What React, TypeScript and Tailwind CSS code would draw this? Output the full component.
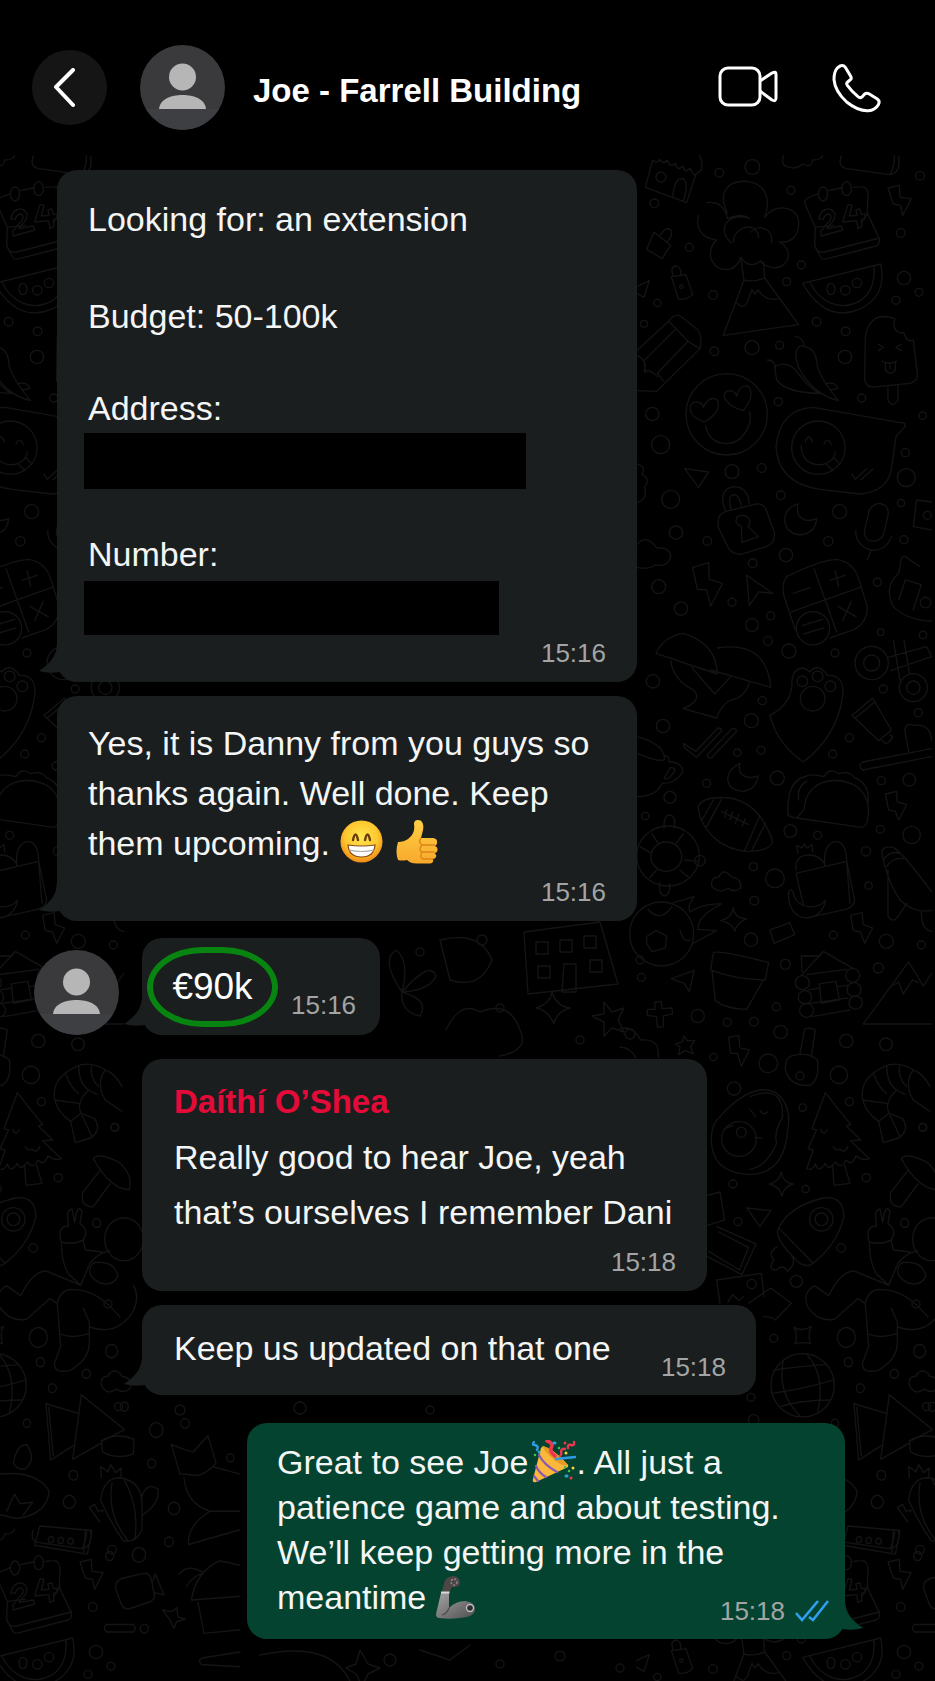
import React from 'react'

const chatFont = "font-['Liberation_Sans',Arial,sans-serif]"

function Dots({ points }: { points: number[][] }) {
  return (
    <>
      {points.map(([x, y, r]) => (
        <circle key={`${x}-${y}`} cx={x} cy={y} r={r} />
      ))}
    </>
  )
}

const topDots = [
  [397, 51, 22], [298, 68, 13], [103, 160, 13], [208, 292, 12], [513, 121, 12], [900, 77, 13], [842, 249, 13],
  [544, 345, 12], [500, 395, 12], [279, 435, 13], [112, 459, 11], [72, 521, 10], [852, 384, 20], [828, 451, 12],
  [897, 427, 12], [590, 515, 13], [677, 544, 13], [283, 604, 13], [396, 593, 21], [479, 586, 12], [675, 621, 20],
  [725, 744, 12], [475, 755, 12], [97, 792, 20], [122, 884, 27], [908, 797, 11], [856, 908, 12], [859, 983, 27],
  [336, 965, 21], [425, 954, 13], [152, 1048, 27], [482, 1036, 13], [659, 1085, 21], [843, 1059, 11], [168, 1148, 20],
  [262, 1173, 13], [625, 1174, 14], [852, 1169, 12], [498, 1215, 20], [398, 1240, 13], [116, 1310, 21], [772, 1297, 12],
  [336, 1357, 12], [183, 1376, 20], [452, 1398, 12], [396, 1425, 19], [444, 1473, 13], [782, 1447, 10], [909, 1455, 11],
]

const midDots = [
  [507, 33, 21], [645, 39, 12], [99, 124, 20], [427, 182, 12], [394, 242, 21], [129, 258, 20], [790, 147, 12],
  [895, 218, 12], [688, 293, 12], [638, 342, 12], [352, 338, 11], [423, 331, 12], [260, 430, 12], [472, 414, 21],
  [784, 422, 12], [868, 419, 19], [150, 472, 18], [76, 528, 11], [511, 573, 19], [593, 586, 12], [781, 568, 12],
  [875, 585, 26], [738, 634, 14], [400, 680, 12], [465, 715, 28], [403, 782, 13], [746, 737, 11], [393, 899, 20],
  [640, 885, 12], [799, 904, 21], [904, 915, 12], [496, 973, 15], [775, 984, 15], [64, 1012, 12], [233, 1128, 20],
  [322, 1147, 12], [402, 1145, 13], [469, 1101, 12], [482, 1176, 20], [679, 1203, 20], [798, 1213, 19],
  [280, 1251, 11], [445, 1270, 28], [657, 1305, 26], [342, 1346, 20], [688, 1385, 12], [548, 1403, 11], [908, 1462, 11],
]

function Doodles() {
  return (
    <svg
      className="absolute inset-0 h-full w-full"
      fill="none"
      stroke="#131413"
      strokeLinecap="round"
      strokeLinejoin="round"
      aria-hidden="true"
    >
      <defs>
        <g id="doodle-tile">
          <g transform="translate(620 150) scale(.3333)" strokeWidth="4">
            <Dots points={topDots} />
            {/* house, cloud and eraser */}
            <path d="M98 30L76 112L200 158L228 72L244 60Q250 30 236 14M98 30Q112 44 118 28Q130 46 142 30Q150 56 166 40Q172 66 188 48Q196 74 210 54Q220 80 228 72M158 138Q164 82 188 86Q208 94 190 154" />
            <circle cx="123" cy="81" r="15" />
            <path d="M490 18Q480 50 512 52Q530 58 548 42Q574 56 578 30Q604 30 608 16M664 18Q652 50 680 56L810 74Q828 40 822 16M810 74Q842 70 836 20" />
            {/* volcano */}
            <path d="M322 190C290 120 330 92 378 94C432 98 456 140 434 202C460 160 530 166 536 214C538 260 510 280 478 276C520 296 512 350 464 354C430 350 420 332 422 332Q390 360 362 322C350 360 320 364 296 354C260 330 268 290 290 270C240 264 226 230 236 196M260 158Q310 150 322 206C372 188 380 200 388 206M334 278C290 240 320 190 380 202M340 276C340 230 410 210 416 262M394 246C420 218 462 240 454 278" />
            <path d="M362 322L372 390L310 556L536 524L434 384L430 336M372 390Q400 398 434 384M350 458Q376 486 388 440L396 418L404 432L414 420Q440 456 476 446" />
            {/* calendar */}
            <path d="M596 130L564 144Q550 150 556 164L586 232L584 286L602 322Q608 330 622 326L768 288Q780 284 778 266L742 190L744 130Q740 108 724 110L700 112M624 122L664 114M586 232L640 226M584 286Q590 310 614 306L778 264M744 190L728 214" />
            <ellipse cx="609" cy="132" rx="14" ry="21" />
            <ellipse cx="680" cy="116" rx="14" ry="21" />
            <path d="M596 206Q606 172 632 178Q654 190 640 212L620 236L664 228L668 240L604 258L602 244L632 208Q636 192 624 192Q614 194 610 208ZM684 164L696 166L688 198L712 196L708 180L720 176L724 194L736 192L734 206L724 208L726 230L714 236L710 212L668 216Z" />
            {/* watermelon */}
            <path d="M548 400L782 342Q804 440 714 480C640 508 586 466 548 400ZM570 396C600 460 660 480 710 458Q768 430 762 348" />
            <ellipse cx="633" cy="417" rx="12" ry="17" />
            <circle cx="676" cy="421" r="14" />
            <circle cx="711" cy="399" r="14" />
            {/* small locks and bolts */}
            <path d="M102 246L152 286L126 326L80 298ZM122 254Q140 226 154 242Q158 260 140 276M154 380L198 374L218 434Q200 450 176 448ZM160 378Q148 350 170 348Q186 356 182 376M804 114L838 106L840 142L874 146L848 196L842 166L820 162ZM50 410L88 392L72 442L50 430" />
            <circle cx="184" cy="410" r="5" />
            {/* pencil */}
            <path d="M50 602L146 514Q162 488 184 500L234 540Q248 564 240 596L110 724L50 722M146 514L204 574L240 596M204 574L112 670L132 694M164 540L72 632L76 668M50 616Q84 630 72 664Q92 658 112 680" />
            {/* chili peppers */}
            <path d="M530 600Q540 580 560 592Q590 600 592 650Q610 700 656 752Q600 740 560 690Q520 640 530 600ZM526 560Q550 560 552 590M464 650Q500 630 530 664Q580 730 606 730Q500 730 470 690ZM442 630Q464 630 466 652M620 700Q650 696 652 716L632 720" />
            {/* ice lolly */}
            <path d="M824 506Q750 480 736 560L734 690Q740 716 770 710L870 700Q896 692 892 670L880 570Q858 578 852 548Q824 552 822 524ZM804 710V750Q818 776 834 750V706M774 582L790 592L776 602M844 582L828 592L844 602M786 634Q810 644 830 634M796 638V660Q812 680 826 660V636M810 640V656" />
            {/* heart eyes */}
            <circle cx="320" cy="793" r="122" />
            <path d="M252 816C196 796 204 754 232 756Q250 760 250 772Q266 738 290 748C304 770 290 796 252 816ZM370 782C302 760 302 724 330 722Q346 724 350 738Q358 704 384 708C402 728 390 756 370 782ZM256 826C270 890 330 890 360 866C386 842 396 810 388 786" />
            {/* speech balloon */}
            <path d="M580 772Q480 776 468 890Q474 1000 600 1018L720 1032Q800 1026 814 960L828 860L856 828Q856 816 842 818Z" />
            <circle cx="595" cy="893" r="80" />
            <path d="M556 876Q566 846 578 876M612 882Q624 858 634 884M544 886C540 960 640 960 646 906M620 944L638 960M640 922L656 938M696 972L706 988L740 956M722 990L758 958" />
            {/* padlock */}
            <path d="M318 1086Q290 1020 340 1010Q384 1010 388 1062M334 1078Q320 1034 344 1034Q360 1040 364 1068M296 1104Q300 1090 320 1084L410 1062Q430 1060 438 1078L464 1150Q464 1180 440 1190L360 1214Q330 1212 318 1180L294 1130ZM364 1130Q340 1118 352 1100Q376 1090 388 1108Q392 1122 384 1130L416 1160L366 1178Z" />
            {/* moon, microphone, planes */}
            <path d="M534 1062C470 1080 490 1160 546 1154Q586 1148 590 1106C550 1122 526 1100 534 1062ZM748 1080Q770 1050 794 1066Q808 1076 804 1096L790 1156Q774 1178 748 1172Q730 1160 734 1140ZM708 1140C700 1200 790 1230 814 1160M752 1204L742 1230M194 956L266 966L236 1012ZM380 1276L458 1330L416 1326L388 1366ZM218 1252L266 1238L268 1288L308 1300L272 1368L260 1320L232 1318Z" />
            {/* calculator */}
            <path d="M500 1280Q600 1230 650 1228Q700 1236 716 1286L742 1370Q742 1420 700 1440L630 1464M500 1280Q480 1310 496 1350L526 1440M582 1256L650 1446M514 1386L720 1312M520 1330L572 1312M632 1290L676 1276M646 1262L656 1310M652 1368L708 1400M694 1354L668 1412M548 1426L608 1408M552 1452L612 1434" />
            <circle cx="579" cy="1435" r="50" />
            <path d="M50 1184Q80 1150 110 1194Q150 1190 152 1222Q140 1254 106 1244Q90 1260 50 1252M50 942Q80 950 66 972Q94 990 74 1010Q84 1050 50 1058M890 1050L935 1056M890 1050L880 1130L935 1140M844 1226Q850 1210 870 1230L900 1250M844 1226L836 1270Q790 1310 820 1370Q860 1410 935 1414M856 1290L904 1304L880 1380M856 1290L836 1350" />
            <circle cx="922" cy="1096" r="12" />
            <circle cx="917" cy="1358" r="16" />
          </g>
          <g transform="translate(620 640) scale(.3333)" strokeWidth="4">
            <Dots points={midDots} />
            {/* parasols */}
            <path d="M108 40Q130 -10 190 -20Q290 10 292 102ZM292 24Q440 0 452 142L272 90M152 62Q160 120 220 150Q250 180 190 206L290 234Q310 180 350 176Q380 160 390 124M215 82L284 162L330 112" />
            {/* paw guitar */}
            <path d="M516 120Q520 86 548 84Q566 90 568 96Q596 66 622 106Q676 104 668 170Q650 290 550 366Q470 310 450 226Q520 190 516 120Z" />
            <circle cx="578" cy="176" r="37" />
            <circle cx="547" cy="124" r="16" />
            <circle cx="593" cy="109" r="16" />
            <circle cx="631" cy="139" r="16" />
            {/* scissors, cup, brush */}
            <circle cx="755" cy="69" r="50" />
            <circle cx="755" cy="69" r="24" />
            <circle cx="880" cy="143" r="42" />
            <circle cx="880" cy="143" r="20" />
            <path d="M804 52L920 20L935 50L812 92M820 0L840 120M852 0L868 100M696 226L758 174L814 270L776 302ZM704 236L764 186M786 300Q800 324 818 290L810 284M728 366L935 326M728 390L935 350M728 366Q712 376 728 390M866 334L854 270Q860 246 882 256Q930 250 935 300M190 310L228 334L294 264Q310 264 302 276L230 352L194 324ZM262 344L336 266Q352 264 348 276L276 352Q262 358 262 344" />
            {/* teacup, moon, football */}
            <path d="M50 290Q130 310 134 356Q130 372 50 340M134 346Q150 350 148 366Q190 366 188 398Q160 434 126 430Q110 470 50 470M150 384Q166 380 164 394Q144 424 132 414ZM360 370C300 400 320 456 372 454Q410 446 414 408C380 420 350 406 360 370ZM234 500Q250 466 330 474Q420 490 458 604Q450 634 380 634C290 626 240 560 234 500ZM260 560L304 478M246 540L284 474M374 632L418 530M394 634L436 550M304 514L386 554M320 508L314 532M338 516L330 540M356 524L346 550M376 536L366 560" />
            {/* taco */}
            <path d="M504 520Q500 420 560 408Q580 400 612 410Q630 380 656 402Q690 390 704 414Q750 430 744 490Q750 556 726 562L530 534Q500 530 504 520ZM552 508C560 420 640 410 690 430Q726 440 744 490M552 508L530 534M536 480Q530 440 560 424" />
            {/* life ring */}
            <ellipse cx="144" cy="648" rx="94" ry="90" />
            <ellipse cx="139" cy="650" rx="46" ry="44" />
            <path d="M132 566Q130 526 150 524Q170 530 162 566M120 728Q114 764 134 768Q154 760 148 730M60 620L94 640M96 582L116 612M190 582L168 610M194 660L232 664M180 690L206 712M90 712L110 690" />
            <circle cx="240" cy="662" r="16" />
            {/* grocery bag */}
            <path d="M528 700L680 664L704 780Q700 806 670 810L560 834M528 700L550 794M680 664L690 790M528 690Q524 650 556 646Q600 640 616 678M534 640L530 616L546 624L552 612L562 624L576 614L578 636M614 670Q610 610 650 604Q680 610 680 664M506 756Q514 740 520 760C530 810 600 810 616 780C610 850 500 860 506 756ZM276 740Q270 710 296 712Q310 680 336 712Q364 712 362 744Q340 760 324 744Q300 764 276 740Z" />
            {/* comet football */}
            <circle cx="125" cy="882" r="96" />
            <path d="M80 890L108 872L140 888L136 924L96 936L80 910ZM84 808Q120 850 156 800M180 870Q190 910 210 900M150 792L222 770Q200 800 210 816Q250 790 304 792Q230 830 234 868L290 872L216 912" />
            <path d="M340 802Q344 836 380 836Q350 850 344 874Q336 848 302 842Q336 834 340 802ZM450 870L510 848L524 884L462 910ZM692 826L726 818L730 854L758 864L734 910L722 876L700 872ZM796 462L830 454L832 486L860 494L836 540L826 514L806 510ZM154 1016L222 992L208 1054L192 1030ZM326 1192L356 1186L360 1224L388 1230L364 1278L352 1240L332 1240Z" />
            {/* pencil, mountain */}
            <path d="M786 640Q784 616 820 622Q850 640 935 756M786 640Q800 720 840 780Q880 820 935 812M790 660Q810 630 840 640M800 680Q820 650 850 656M804 690V830Q820 850 834 830L860 790M904 816Q904 870 935 874M730 1152H935M730 1152L866 966L910 1038L935 1000M820 1036L836 1026L850 1062L878 1020L896 1028" />
            {/* plant pot and cabin */}
            <path d="M280 938Q300 930 446 968L436 1020Q350 1020 272 990ZM276 992L286 1082Q320 1108 380 1108L430 1020M546 996L544 948H600L610 934L700 986M546 1004L608 936M560 1004L680 988M566 1050L600 1044M654 1040L684 1036M572 1090L684 1074M576 1130L690 1110M598 1032L648 1024L658 1080L604 1090Z" />
            <Dots points={[[547, 1028, 21], [555, 1072, 20], [560, 1111, 21], [698, 1006, 21], [702, 1049, 21], [707, 1088, 20]]} />
            <path d="M104 1086L124 1084L126 1106L156 1104L158 1122L130 1128L130 1160L112 1162L110 1130L82 1126V1108L106 1108ZM192 1188L202 1202L224 1202L212 1220L220 1242L196 1232L176 1244L180 1220L166 1212L188 1206ZM0 1166Q40 1156 62 1200Q110 1196 114 1230L116 1254M0 1222Q30 1220 48 1254M540 1240L554 1168Q570 1160 586 1170L574 1252M520 1246Q570 1236 592 1260Q600 1320 570 1336Q510 1340 496 1290Q494 1250 520 1246Z" />
            <circle cx="540" cy="1308" r="12" />
          </g>
          <g transform="translate(700 1050) scale(.3333)" strokeWidth="4">
            <Dots
              points={[
                [99, 402, 12], [317, 417, 11], [114, 515, 12], [424, 594, 13], [289, 694, 18], [155, 702, 14], [499, 383, 12],
                [669, 232, 12], [153, 1042, 12], [648, 762, 12], [161, 1110, 16], [680, 1070, 12], [221, 865, 12],
              ]}
            />
            {/* avocado */}
            <path d="M60 200Q150 100 220 124Q280 160 262 250Q250 370 150 374Q30 370 34 260Q36 220 60 200ZM150 140Q250 100 248 200Q220 250 230 280Q200 350 150 358M74 236L98 226M164 262L184 264M150 178L166 200M180 182Q190 198 202 186" />
            <circle cx="117" cy="267" r="52" />
            <circle cx="124" cy="247" r="15" />
            {/* tree */}
            <path d="M376 128L336 236L350 240L324 296L340 300L320 356Q336 364 346 342Q356 372 376 340Q386 366 406 336Q424 360 438 330Q456 350 468 318Q490 334 508 326L452 272L482 270L440 228L452 224ZM398 348L402 406L450 400L434 346M362 238Q370 260 382 240M400 290Q410 306 420 296Q430 314 444 290" />
            {/* shrimp */}
            <path d="M690 184L640 150Q610 100 640 60Q670 70 690 110M640 60Q580 20 520 70Q480 100 488 150Q500 190 536 214L550 278L596 264Q630 240 608 206L568 190Q550 160 590 120L616 134M520 70Q540 120 560 130M488 150L560 160M560 46Q560 100 590 120M600 44Q590 80 620 110M536 214L568 190M570 196L600 260" />
            {/* sparkles and plane */}
            <path d="M244 366Q248 398 280 402Q250 410 246 438Q240 410 208 402Q238 396 244 366ZM282 832Q306 846 334 830Q322 856 332 882Q308 874 284 882Q296 856 282 832ZM140 474L212 482L180 530Z" />
            {/* rocket */}
            <path d="M232 544Q260 470 370 444Q430 436 432 500Q410 590 330 646Q300 650 280 620Q236 580 232 544ZM238 536L340 640M232 590Q200 610 222 630Q200 660 230 660Q250 640 262 664Q290 640 276 620" />
            <circle cx="364" cy="508" r="35" />
            <circle cx="364" cy="508" r="19" />
            {/* photos */}
            <path d="M22 436L60 426L74 510L22 526M50 530L168 582L126 674L22 620M56 546L146 592L118 660L26 604M50 690L184 670L192 740M50 690L60 760M84 756L98 734L118 752L130 740M146 760L212 714L274 760L226 810L214 802L190 800" />
            {/* ball */}
            <circle cx="308" cy="1006" r="95" />
            <path d="M222 960Q290 950 380 944M216 1030Q300 1020 402 990M240 1070Q300 1050 392 1050M250 930Q230 1030 300 1098M320 912Q380 980 352 1090" />
          </g>
        </g>
        <g id="doodle-corner">
          <g transform="translate(0 1100) scale(.3333 .3704)" strokeWidth="4">
            {/* mushroom */}
            <path d="M280 158Q300 140 360 170Q400 206 388 242Q330 240 280 158ZM300 190L248 250Q240 290 280 288L330 226" />
            {/* astronaut */}
            <circle cx="372" cy="376" r="58" />
            <path d="M184 384Q170 340 206 340Q196 296 216 294L224 330Q230 280 246 300L240 334Q268 350 250 378Q220 392 184 384ZM184 384Q184 440 206 470L242 500L270 440Q290 416 330 406M250 382L256 404L314 412M62 528Q100 460 140 462L242 500M62 528L20 502Q-20 520 0 560Q30 600 80 592L150 536L172 550M172 550Q180 510 220 512Q290 510 360 586M172 550L182 664L164 710Q160 740 210 730Q270 700 268 650V600L250 562M180 632Q220 646 268 630M268 612Q350 640 400 570Q420 530 400 500M280 440Q340 430 354 474Q340 504 300 494Q250 470 280 440Z" />
            {/* sandwiches and cloud */}
            <path d="M138 820L152 972L218 934M138 820L236 846M146 830L160 960M244 796L218 970L304 926M244 796L374 890L308 920M304 920Q350 896 402 916L400 956Q350 972 308 950ZM304 770Q300 746 322 746Q346 716 366 746Q396 750 392 776Q370 796 350 780Q320 800 304 770Z" />
            {/* cactus */}
            <path d="M302 1080Q310 1020 360 1020Q430 1030 426 1100L426 1160Q410 1196 370 1190Q330 1140 302 1080ZM336 1034Q320 1120 384 1190M370 1020Q420 1100 404 1186M304 1020L302 990L324 1004L332 984L346 1006L364 994L362 1020M426 1070Q440 1030 474 1050Q480 1090 428 1120M300 1140L268 1100L284 1092L294 1110L310 1108" />
            {/* bowl, brick, camera */}
            <path d="M0 1010Q110 1000 148 1056Q140 1120 50 1130L0 1120M40 980Q50 930 80 930Q110 970 76 996Q50 1000 40 980ZM20 1110L44 1064L60 1090L98 1086L70 1120M120 1150L276 1162L262 1226L104 1202ZM252 1220L256 1162M346 1316Q346 1300 366 1292L430 1278Q450 1276 454 1296L464 1340Q460 1354 440 1358L386 1374Q366 1374 362 1356ZM456 1306L466 1280L492 1336L464 1330" />
            <Dots points={[[153, 1187, 8], [182, 1189, 8], [212, 1191, 8], [121, 708, 12], [115, 641, 27], [157, 778, 12], [259, 739, 12], [81, 873, 11], [335, 678, 18], [373, 828, 12], [469, 891, 20], [555, 873, 13], [455, 981, 12], [220, 1013, 13], [208, 1085, 18], [507, 1193, 13], [329, 1231, 12], [417, 1228, 20], [433, 1427, 12], [522, 1103, 17], [290, 332, 12], [691, 966, 11]]} />
            {/* fox, hut, sliders */}
            <path d="M540 1010L514 930L560 946L580 950L624 906L648 980Q620 1010 590 1014Q550 1010 540 1010ZM640 990L720 1010M552 1020Q560 1090 630 1110L720 1110M630 1110Q560 1150 566 1200L720 1160M574 1350Q590 1270 660 1244L720 1256M574 1350L720 1340M594 1356L612 1440L720 1430M538 1280Q560 1250 612 1276Q570 1290 560 1314M488 1376Q520 1388 530 1370L534 1396L556 1402L530 1408L522 1426L510 1404ZM604 1524Q590 1510 610 1506L720 1490M604 1524L720 1530M320 1416H400Q412 1426 400 1436H320Q306 1426 320 1416" />
          </g>
        </g>
      </defs>
      <use href="#doodle-tile" />
      <use href="#doodle-tile" x="-808" />
      <use href="#doodle-tile" y="1374" />
      <use href="#doodle-tile" x="-808" y="1374" />
      <use href="#doodle-corner" />
      <use href="#doodle-corner" x="808" />
      <g strokeWidth="1.4">
        {/* flower, flats and pinwheel between the bubbles */}
        <path d="M524 932L600 922L618 984L528 994ZM536 942h12v12h-12zM560 940h12v12h-12zM584 936h12v12h-12zM538 966h12v12h-12zM564 964h12v28h-14zM590 960h12v12h-12zM402 992Q380 960 396 950Q410 960 402 992Q430 960 436 976Q430 990 402 992Q430 1000 420 1016Q400 1012 402 992M440 940Q480 930 492 960Q480 990 450 980ZM446 1030Q460 1000 480 1012Q510 1000 520 1030Q530 1050 500 1056M552 992Q556 1006 570 1008Q556 1012 554 1024Q548 1010 536 1008Q550 1004 552 992ZM604 1002l8 10 12 -4 -6 12 6 12 -12 -4 -8 8v-14l-12 -6 12 -2zM260 1655Q330 1640 350 1681M420 1650L450 1660L470 1645M360 1650l8 14 12 4-12 6-6 12-6-12-10-6 10-4z" />
        <Dots points={[[420, 952, 4], [500, 1008, 4], [580, 1040, 4], [630, 1034, 5], [482, 940, 5], [640, 960, 4], [390, 1660, 6], [500, 1664, 4], [560, 1656, 5], [620, 1668, 4], [180, 1410, 5], [300, 1408, 6], [430, 1410, 4]]} />
      </g>
    </svg>
  )
}

function Avatar() {
  return (
    <svg className="h-[85px] w-[85px] shrink-0" viewBox="0 0 85 85" role="img" aria-label="Profile picture">
      <circle cx="42.5" cy="42.5" r="42.5" fill="#3a3a3d" />
      <path d="M6 64H79A42.5 42.5 0 0 1 6 64Z" fill="#3e3f43" />
      <circle cx="42.5" cy="32" r="13.5" fill="#b6b6b6" />
      <path d="M19 64C20 54 31 50 42.5 50S65 54 66 64Z" fill="#b6b6b6" />
    </svg>
  )
}

function Tail({ side = 'left' }: { side?: 'left' | 'right' }) {
  return side === 'left' ? (
    <svg className="absolute bottom-[7px] -left-[18px] h-8 w-6" viewBox="0 0 24 32" fill="#1a1e1f" aria-hidden="true">
      <path d="M18 0C18 12 12 20 0 28Q10 31 21 29L23 20V0Z" />
    </svg>
  ) : (
    <svg className="absolute -right-[18px] bottom-[7px] h-8 w-6" viewBox="0 0 24 32" fill="#044330" aria-hidden="true">
      <path d="M6 0C6 12 12 20 24 28Q14 31 3 29L1 20V0Z" />
    </svg>
  )
}

function Time({ value, className = '' }: { value: string; className?: string }) {
  return <time className={`block text-right text-[26px] leading-[30px] text-[#a3a5a5] ${className}`}>{value}</time>
}

function Grin() {
  return (
    <svg className="mx-px inline-block h-[43px] w-[43px] align-[-8px]" viewBox="0 0 43 43" role="img" aria-label="grinning face">
      <defs>
        <radialGradient id="grin" cx=".5" cy=".4" r=".6">
          <stop offset="0" stopColor="#ffe64f" />
          <stop offset=".65" stopColor="#fdc72e" />
          <stop offset="1" stopColor="#f08a17" />
        </radialGradient>
      </defs>
      <circle cx="21.5" cy="21.5" r="21" fill="url(#grin)" />
      <path d="M13 20Q15.5 9 18 20M25 20Q27.5 9 30 20" fill="none" stroke="#6b3d0c" strokeWidth="2.4" strokeLinecap="round" />
      <path d="M8 25Q21.500 27 35 25Q34 37 21.5 37T8 25Z" fill="#fff" stroke="#8a4b16" strokeWidth="1.2" />
      <path d="M9 30Q21.5 33 34 30" fill="none" stroke="#a9a9a9" strokeWidth="1.2" />
    </svg>
  )
}

function ThumbsUp() {
  return (
    <svg className="mx-[2px] inline-block h-[44px] w-[42px] align-[-9px]" viewBox="0 0 42 44" role="img" aria-label="thumbs up">
      <defs>
        <linearGradient id="thumb" x1="0" y1="0" x2="0" y2="1">
          <stop offset="0" stopColor="#ffcf45" />
          <stop offset="1" stopColor="#f7a92b" />
        </linearGradient>
      </defs>
      <path
        d="M2 22Q8 22 12 19C17 15 19 11 18 4Q18 0 22 0C27 0 28 6 27 10L25 18H37Q42 19 41 23Q41 25 39 26Q42 27 41.5 30Q41 33 38.5 33Q41 35 40 37Q39 39 37 39Q38 43 34 43.5H22Q15 44 11 40Q6 41 2 40Q-1 32 2 22Z"
        fill="url(#thumb)"
      />
      <path d="M25 18Q22 22 26 25H39M26 25Q22 30 26 32H38.5M26 32Q23 37 27 39H37" fill="none" stroke="#dd8518" strokeWidth="1.4" />
    </svg>
  )
}

function Party() {
  return (
    <svg className="ml-1 inline-block h-[43px] w-[44px] align-[-9px]" viewBox="0 0 44 43" fill="none" strokeLinecap="round" role="img" aria-label="party popper">
      <path d="M11 6Q22 9 36 25Q37 27 34 28L4 42Q0 43 1 39L9 8Z" fill="#fbb83a" />
      <path d="M11 6Q22 9 36 25Q30 27 20 18T11 6Z" fill="#e89a24" />
      <path d="M7 15Q12 25 25 32M4 26Q7 33 14 37M2 36L6 41" stroke="#8a59b5" strokeWidth="2.2" />
      <path d="M15 1Q22 3 19 8Q18 12 23 16" stroke="#ef3651" strokeWidth="3.6" />
      <path d="M2 2Q-1 5 3 5Q7 6 5 10" stroke="#2d9be8" strokeWidth="2.4" />
      <path d="M42 2Q43 6 39 5Q35 4 36 8M28 16Q30 14 29 11Q30 8 33 9" stroke="#ef3651" strokeWidth="2.4" />
      <path d="M24 19L43 17" stroke="#2d9be8" strokeWidth="2.6" />
      <path d="M22 3h1M34 36h1M7 12h0" stroke="#23a6e0" strokeWidth="3" />
      <path d="M27 8h0M33 27h0M3 15h0M37 31h0" stroke="#42c05a" strokeWidth="2.6" />
      <path d="M33 3h0M39 38h0" stroke="#ef3651" strokeWidth="3" />
      <path d="M41 28h0M34 13h0" stroke="#ffcf45" strokeWidth="3" />
    </svg>
  )
}

function RoboArm() {
  return (
    <svg className="inline-block h-[43px] w-[40px] align-[-10px]" viewBox="0 0 40 43" role="img" aria-label="mechanical arm">
      <defs>
        <linearGradient id="arm" x1="0" y1="0" x2="1" y2="1">
          <stop offset="0" stopColor="#a3a3a3" />
          <stop offset=".5" stopColor="#7a7a7a" />
          <stop offset="1" stopColor="#4d4d4d" />
        </linearGradient>
      </defs>
      <path d="M5 17L13 17L13 32Q20 25 29 25Q39 26 39 33Q39 39 31 41Q16 44 3 42Q0 42 0 38Z" fill="url(#arm)" />
      <path d="M6 16L8 7Q10 0 18 0Q24 1 24 7Q23 12 16 11L13 17Z" fill="#4c4646" />
      <path d="M5 16.5H13.5" stroke="#d9d9d9" strokeWidth="2" />
      <circle cx="18" cy="6" r="3" fill="none" stroke="#908a8a" strokeWidth="1.4" strokeDasharray="2 1.5" />
      <circle cx="34" cy="32" r="3.5" fill="#2f2f2f" stroke="#bdbdbd" strokeWidth="1.4" />
      <path d="M13 32Q11 38 6 39" fill="none" stroke="#4d4d4d" strokeWidth="1.2" />
    </svg>
  )
}

const incoming = 'relative max-w-full rounded-[20px] bg-[#1a1e1f]'

export default function App() {
  return (
    <div className={`flex min-h-screen flex-col bg-black text-[34px] leading-[50px] text-[#f4f5f5] ${chatFont}`}>
      <header className="flex items-center pt-[45px] pr-[53px] pb-[25px] pl-8">
        <button type="button" aria-label="Back" className="flex h-[75px] w-[75px] items-center justify-center rounded-full bg-[#151515]">
          <svg className="mr-3 h-10 w-[22px]" viewBox="0 0 22 40" fill="none" stroke="#fff" strokeWidth="4" strokeLinecap="round" strokeLinejoin="round">
            <path d="M20 2L3 19L20 37" />
          </svg>
        </button>
        <div className="ml-[33px] flex">
          <Avatar />
        </div>
        <h1 className="ml-7 pt-[6px] text-[33px] leading-10 font-bold text-white">Joe - Farrell Building</h1>
        <button type="button" aria-label="Video call" className="ml-auto">
          <svg className="h-[45px] w-[62px]" viewBox="0 0 62 45" fill="none" stroke="#fff" strokeWidth="3" strokeLinejoin="round">
            <rect x="2" y="3" width="40" height="37" rx="8" />
            <path d="M42 16L54 8Q58 6 58 9V33Q58 37 54 35L42 26" />
          </svg>
        </button>
        <button type="button" aria-label="Voice call" className="ml-[52px]">
          <svg className="h-[50px] w-[50px]" viewBox="396 36 150 148" fill="none" stroke="#fff" strokeWidth="9" strokeLinejoin="round">
            <path d="M412 50Q402 60 402 85Q405 120 440 152Q475 180 505 178Q525 177 535 160Q541 150 532 143L508 128Q500 123 494 128L486 137Q480 141 474 136Q455 120 442 102Q438 96 443 92L450 86Q456 82 452 75L436 48Q430 40 420 44Z" />
          </svg>
        </button>
      </header>

      <main className="relative flex-1 overflow-hidden">
        {/* wallpaper starts under the header, so it is shifted up by the header height */}
        <div className="absolute inset-x-0 -top-[155px] bottom-0 [clip-path:inset(155px_0_0_0)]">
          <Doodles />
        </div>

        <div className="relative flex flex-col items-start pt-[15px] pr-[90px] pb-[42px] pl-[57px]">
          <article className={`${incoming} w-[580px] px-[31px] pt-6 pb-[14px]`}>
            <Tail />
            <p>Looking for: an extension</p>
            <p className="mt-[47px]">Budget: 50-100k</p>
            <p className="mt-[42px]">Address:</p>
            <div className="-ml-1 h-14 w-[442px] bg-black" />
            <p className="mt-10">Number:</p>
            <div className="mt-[2px] -ml-1 h-[54px] w-[415px] bg-black" />
            <Time value="15:16" className="mt-[3px]" />
          </article>

          <article className={`${incoming} mt-[14px] w-[580px] px-[31px] pt-[22px] pb-[14px]`}>
            <Tail />
            <p>
              Yes, it is Danny from you guys so thanks again. Well done. Keep them upcoming. <Grin /> <ThumbsUp />
            </p>
            <Time value="15:16" className="mt-[9px]" />
          </article>

          <div className="-ml-[23px] flex items-end pt-[17px]">
            <Avatar />
            <article className={`${incoming} ml-[23px] flex h-[97px] w-[238px] items-end pb-2 pl-[5px]`}>
              <Tail />
              <p className="flex h-20 w-[131px] items-center justify-center rounded-[56px/40px] border-[6px] border-[#088410] text-[37px] text-white">€90k</p>
              <Time value="15:16" className="mb-[7px] ml-[13px]" />
            </article>
          </div>

          <article className={`${incoming} mt-6 ml-[85px] w-[565px] pt-[18px] pr-[31px] pb-[14px] pl-8 leading-[55px]`}>
            <h2 className="text-[33px] leading-[50px] font-bold text-[#e40b38]">Daíthí O’Shea</h2>
            <p className="mt-[3px]">Really good to hear Joe, yeah that’s ourselves I remember Dani</p>
            <Time value="15:18" className="mt-[7px]" />
          </article>

          <article className={`${incoming} mt-[14px] ml-[85px] flex w-[614px] items-end justify-between pt-[18px] pr-[30px] pb-[13px] pl-8`}>
            <Tail />
            <p className="mb-[9px]">Keep us updated on that one</p>
            <Time value="15:18" />
          </article>

          <article className="relative mt-7 w-[598px] max-w-full self-end rounded-[20px] bg-[#044330] px-[30px] pt-[17px] pb-[13px] leading-[45px]">
            <Tail side="right" />
            <p>
              Great to see Joe
              <Party />. All just a
              <br />
              patience game and about testing.
              <br />
              We’ll keep getting more in the
              <br />
              meantime <RoboArm />
            </p>
            <div className="-mt-6 -mr-[14px] flex items-center justify-end gap-[10px]">
              <Time value="15:18" />
              <svg className="h-[22px] w-[34px]" viewBox="0 0 34 22" fill="none" stroke="#2f9ff0" strokeWidth="2.6" role="img" aria-label="Read">
                <path d="M1 13L7 20L23 1M14 17L18 20L33 1" />
              </svg>
            </div>
          </article>
        </div>
      </main>
    </div>
  )
}
